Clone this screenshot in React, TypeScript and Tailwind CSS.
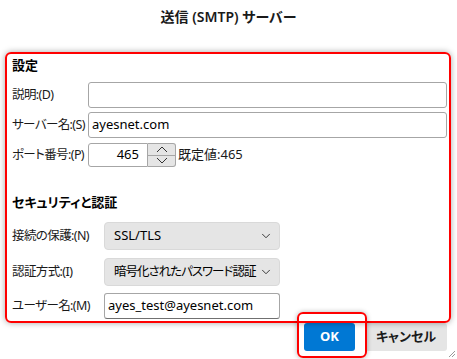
import { ChevronDown } from 'lucide-react';

const Chevron = ({ up = false }: { up?: boolean }) => (
  <svg width="12" height="7" viewBox="0 0 12 7" className="block">
    <polyline
      points={up ? '1,6 6,1 11,6' : '1,1 6,6 11,1'}
      fill="none"
      stroke="#333"
      strokeWidth="1"
    />
  </svg>
);

function FieldRow({ label, labelWidth, children, className }: { label: string; labelWidth: string; children: React.ReactNode; className: string }) {
  return (
    <div className={`flex items-center ${className}`}>
      <div className={`${labelWidth} shrink-0 text-[12.5px] tracking-[-0.6px] text-[#1a1a1a]`}>{label}</div>
      {children}
    </div>
  );
}

export default function App() {
  return (
    <div className="relative w-[457px] h-[359px] overflow-hidden bg-white text-black font-['Noto_Sans','Noto_Sans_CJK_JP',sans-serif] [font-feature-settings:'palt']">
      <div className="h-[32px] flex items-center justify-center text-[14px] font-semibold text-[#1a1a1a]">
        送信 (SMTP) サーバー
      </div>

      <div className="pl-[12px] pr-[10px]">
        <div className="mt-[24px] h-[20px] flex items-center text-[13px] font-bold">設定</div>

        <FieldRow label="説明:(D)" labelWidth="w-[76px]" className="mt-[6px] h-[26px]">
          <div className="flex-1 h-full border border-[#a6a6a6] rounded-[3px] bg-white"></div>
        </FieldRow>

        <FieldRow label="サーバー名:(S)" labelWidth="w-[76px]" className="mt-[4px] h-[26px]">
          <div className="flex-1 h-full border border-[#a6a6a6] rounded-[3px] bg-white flex items-center pl-[3px] text-[13px]">
            ayesnet.com
          </div>
        </FieldRow>

        <FieldRow label="ポート番号:(P)" labelWidth="w-[76px]" className="mt-[5px] h-[24px]">
          <div className="w-[60px] h-full border border-[#a6a6a6] rounded-l-[3px] bg-white flex items-center justify-end pr-[8px] text-[13px]">
            465
          </div>
          <div className="w-[28px] h-full border border-l-0 border-[#a6a6a6] rounded-r-[3px] bg-[#e5e5e5] flex flex-col">
            <div className="flex-1 flex items-center justify-center border-b border-[#a6a6a6]">
              <Chevron up />
            </div>
            <div className="flex-1 flex items-center justify-center">
              <Chevron />
            </div>
          </div>
          <div className="ml-[2px] text-[13px] text-[#1a1a1a]">既定値:465</div>
        </FieldRow>

        <div className="mt-[26px] h-[20px] flex items-center text-[13px] font-bold">セキュリティと認証</div>

        <FieldRow label="接続の保護:(N)" labelWidth="w-[92px]" className="mt-[9px] h-[28px]">
          <div className="w-[176px] h-full bg-[#e5e5e5] border border-[#d9d9d9] rounded-[4px] flex items-center justify-between pl-[9px] pr-[6px] text-[13px]">
            <span>SSL/TLS</span>
            <ChevronDown size={14} strokeWidth={1.5} color="#222" />
          </div>
        </FieldRow>

        <FieldRow label="認証方式:(I)" labelWidth="w-[92px]" className="mt-[8px] h-[28px]">
          <div className="w-[176px] h-full bg-[#e5e5e5] border border-[#d9d9d9] rounded-[4px] flex items-center justify-between pl-[9px] pr-[6px] whitespace-nowrap overflow-hidden">
            <span className="text-[12.5px] tracking-[-1px]">暗号化されたパスワード認証</span>
            <ChevronDown size={14} strokeWidth={1.5} color="#222" className="shrink-0" />
          </div>
        </FieldRow>

        <FieldRow label="ユーザー名:(M)" labelWidth="w-[92px]" className="mt-[7px] h-[26px]">
          <div className="w-[176px] h-full border border-[#a6a6a6] border-b-[#707070] rounded-[3px] bg-white flex items-center pl-[3px] text-[13px]">
            ayes_test@ayesnet.com
          </div>
        </FieldRow>

        <div className="mt-[4px] flex justify-end gap-[10px]">
          <button className="w-[51px] h-[28px] bg-[#0078d4] rounded-[3px] text-white text-[13px] font-bold">OK</button>
          <button className="w-[82px] h-[28px] bg-[#e5e5e5] rounded-[3px] text-[13px] font-bold text-[#1a1a1a]">キャンセル</button>
        </div>
      </div>

      {/* annotation overlays */}
      <div className="absolute left-[5px] top-[52px] w-[446px] h-[271px] border-2 border-[#ff0000] rounded-[6px] shadow-[0_0_6px_rgba(0,0,0,0.35)] pointer-events-none"></div>
      <div className="absolute left-[297px] top-[312px] w-[70px] h-[46px] border-2 border-[#ff0000] rounded-[6px] shadow-[0_0_5px_rgba(0,0,0,0.3)] pointer-events-none"></div>

      <svg className="absolute right-[1px] bottom-[1px]" width="8" height="8" viewBox="0 0 8 8">
        <line x1="7" y1="1" x2="1" y2="7" stroke="#999" strokeWidth="1" />
        <line x1="7" y1="4" x2="4" y2="7" stroke="#999" strokeWidth="1" />
      </svg>
    </div>
  );
}
